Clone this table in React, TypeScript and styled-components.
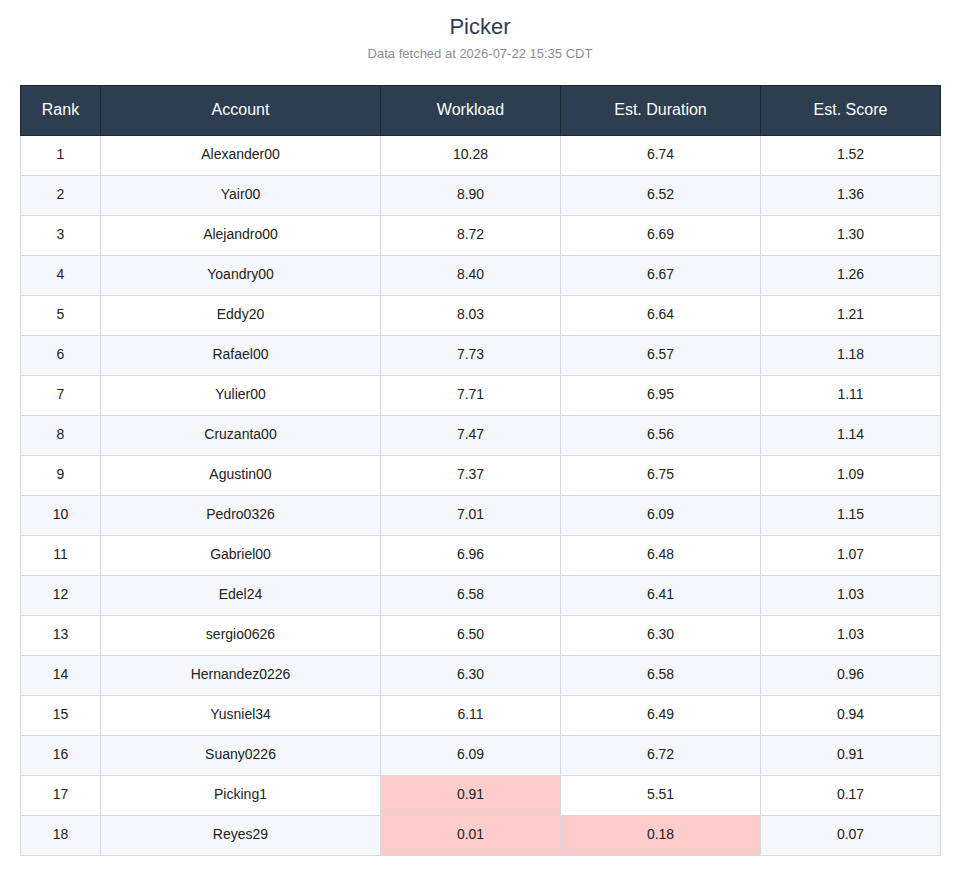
import { createGlobalStyle } from 'styled-components';
import styled from 'styled-components';

const GlobalStyle = createGlobalStyle`
  body {
    margin: 0;
    background: #ffffff;
    font-family: "Liberation Sans", Arial, sans-serif;
  }
`;

type Row = {
  account: string;
  workload: number;
  duration: number;
  score: number;
};

const rows: Row[] = [
  { account: 'Alexander00', workload: 10.28, duration: 6.74, score: 1.52 },
  { account: 'Yair00', workload: 8.9, duration: 6.52, score: 1.36 },
  { account: 'Alejandro00', workload: 8.72, duration: 6.69, score: 1.3 },
  { account: 'Yoandry00', workload: 8.4, duration: 6.67, score: 1.26 },
  { account: 'Eddy20', workload: 8.03, duration: 6.64, score: 1.21 },
  { account: 'Rafael00', workload: 7.73, duration: 6.57, score: 1.18 },
  { account: 'Yulier00', workload: 7.71, duration: 6.95, score: 1.11 },
  { account: 'Cruzanta00', workload: 7.47, duration: 6.56, score: 1.14 },
  { account: 'Agustin00', workload: 7.37, duration: 6.75, score: 1.09 },
  { account: 'Pedro0326', workload: 7.01, duration: 6.09, score: 1.15 },
  { account: 'Gabriel00', workload: 6.96, duration: 6.48, score: 1.07 },
  { account: 'Edel24', workload: 6.58, duration: 6.41, score: 1.03 },
  { account: 'sergio0626', workload: 6.5, duration: 6.3, score: 1.03 },
  { account: 'Hernandez0226', workload: 6.3, duration: 6.58, score: 0.96 },
  { account: 'Yusniel34', workload: 6.11, duration: 6.49, score: 0.94 },
  { account: 'Suany0226', workload: 6.09, duration: 6.72, score: 0.91 },
  { account: 'Picking1', workload: 0.91, duration: 5.51, score: 0.17 },
  { account: 'Reyes29', workload: 0.01, duration: 0.18, score: 0.07 },
];

// cells below these values get the red warning background
const WORKLOAD_MIN = 1;
const DURATION_MIN = 1;

const Page = styled.div`
  padding: 14px 20px 20px;
`;

const Title = styled.h1`
  margin: 0;
  font-size: 22px;
  line-height: 26px;
  font-weight: normal;
  color: #2c3e50;
  text-align: center;
`;

const Subtitle = styled.div`
  margin-top: 6px;
  font-size: 13px;
  line-height: 16px;
  color: #8a8f96;
  text-align: center;
`;

const Table = styled.table`
  margin-top: 23px;
  width: 920px;
  border-collapse: collapse;
  table-layout: fixed;
  font-size: 14px;
  color: #222;
`;

const Col = styled.col<{ $w: number }>`
  width: ${(p) => p.$w}px;
`;

const HeadCell = styled.th`
  padding: 16px 0 17px;
  line-height: 16px;
  background: #2c3e50;
  color: #ffffff;
  font-size: 16px;
  font-weight: normal;
  border: 1px solid #1c2733;
  text-align: center;
`;

const BodyRow = styled.tr`
  background: #ffffff;
  &:nth-child(even) {
    background: #f5f7fa;
  }
`;

const Cell = styled.td<{ $alert?: boolean }>`
  padding: 10px 0 13px;
  line-height: 16px;
  text-align: center;
  border: 1px solid #d3dae3;
  background: ${(p) => (p.$alert ? '#ffcccc' : 'transparent')};
`;

const columns = [
  { label: 'Rank', w: 80 },
  { label: 'Account', w: 280 },
  { label: 'Workload', w: 180 },
  { label: 'Est. Duration', w: 200 },
  { label: 'Est. Score', w: 180 },
];

export default function App() {
  return (
    <Page>
      <GlobalStyle />
      <Title>Picker</Title>
      <Subtitle>Data fetched at 2026-07-22 15:35 CDT</Subtitle>
      <Table>
        <colgroup>
          {columns.map((c) => (
            <Col key={c.label} $w={c.w} />
          ))}
        </colgroup>
        <thead>
          <tr>
            {columns.map((c) => (
              <HeadCell key={c.label}>{c.label}</HeadCell>
            ))}
          </tr>
        </thead>
        <tbody>
          {rows.map((r, i) => (
            <BodyRow key={r.account}>
              <Cell>{i + 1}</Cell>
              <Cell>{r.account}</Cell>
              <Cell $alert={r.workload < WORKLOAD_MIN}>{r.workload.toFixed(2)}</Cell>
              <Cell $alert={r.duration < DURATION_MIN}>{r.duration.toFixed(2)}</Cell>
              <Cell>{r.score.toFixed(2)}</Cell>
            </BodyRow>
          ))}
        </tbody>
      </Table>
    </Page>
  );
}
